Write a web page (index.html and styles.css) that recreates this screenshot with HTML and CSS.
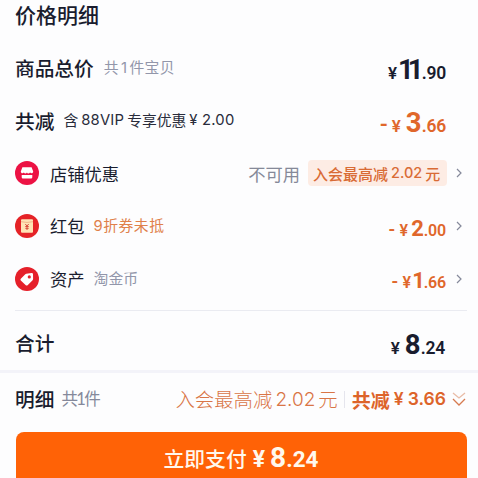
FILE: index.html
```html
<!DOCTYPE html>
<html lang="zh-CN">
<head>
<meta charset="utf-8">
<title>价格明细</title>
<link rel="stylesheet" href="styles.css">
</head>
<body>
<main class="sheet">
  <h1 class="title">价格明细</h1>
  <section class="rows">
    <div class="row">
      <span class="label">商品总价</span><span class="hint goods">共<span class="latin">1</span>件宝贝</span>
      <span class="price total"><span class="yen">¥</span><span class="int ones">11</span><span class="dec">.90</span></span>
    </div>
    <div class="row">
      <span class="label">共减</span><span class="vip"><span>含</span><span class="latin">88VIP</span><span>专享优惠</span><span class="latin amount">¥ 2.00</span></span>
      <span class="price orange"><span class="minus">-</span><span class="yen">¥</span><span class="int">3</span><span class="dec">.66</span></span>
    </div>
    <div class="row item">
      <svg class="icon" viewBox="0 0 24 24"><circle cx="12" cy="12" r="12" fill="#ec1244"/><path fill="#fff" d="M7.4 6.3h9.2l1.6 4.2c0 1.8-2 2.3-3.1 1.1-1 1.2-2.9 1.2-3.1 0-.9 1.2-2.5 1.2-3.1 0-1.1 1.2-3.1.7-3.1-1.1zM6.7 14h10.6v2.2q0 1.2-1.2 1.2H7.9q-1.2 0-1.2-1.2z"/></svg>
      <span class="name">店铺优惠</span>
      <span class="unavailable">不可用</span><span class="badge"><span>入会最高减</span><span class="latin">2.02</span><span>元</span></span>
      <svg class="chevron" viewBox="0 0 6 10"><path d="M1 1l4 4-4 4"/></svg>
    </div>
    <div class="row item">
      <svg class="icon" viewBox="0 0 24 24"><circle cx="12" cy="12" r="12" fill="#e52327"/><rect x="6" y="5.2" width="12" height="13.6" rx="1" fill="#ffe3b5"/><path d="M6 7.7q6 1.5 12 0" fill="none" stroke="#e9a074" stroke-width=".7"/><path d="M10.3 10l1.7 2 1.7-2M12 12v4M10.3 12.5h3.4M10.3 14.3h3.4" fill="none" stroke="#d94c3b" stroke-width="1"/></svg>
      <span class="name">红包</span><span class="hint coupon"><span class="latin">9</span>折券未抵</span>
      <span class="price orange small"><span class="minus">-</span><span class="yen">¥</span><span class="int">2</span><span class="dec">.00</span></span>
      <svg class="chevron" viewBox="0 0 6 10"><path d="M1 1l4 4-4 4"/></svg>
    </div>
    <div class="row item">
      <svg class="icon" viewBox="0 0 24 24"><circle cx="12" cy="12" r="12" fill="#e5202a"/><path fill="#fff" d="M11.3 6.7l5.3-.8q1.3-.1 1.4 1.2l.1 5q0 .6-.5 1.1l-5 5q-.9.8-1.8 0l-5-4.7q-.8-.8 0-1.7l4.5-4.6q.4-.4 1-.5z"/><circle cx="14.3" cy="9.9" r="1.6" fill="#e5202a"/></svg>
      <span class="name">资产</span><span class="hint coin">淘金币</span>
      <span class="price orange small"><span class="minus">-</span><span class="yen">¥</span><span class="int one">1</span><span class="dec">.66</span></span>
      <svg class="chevron" viewBox="0 0 6 10"><path d="M1 1l4 4-4 4"/></svg>
    </div>
  </section>
  <div class="sum">
    <span class="label">合计</span>
    <span class="price"><span class="yen">¥</span><span class="int">8</span><span class="dec">.24</span></span>
  </div>
</main>
<footer class="footer">
  <div class="summary">
    <span class="label">明细</span><span class="count">共1件</span>
    <span class="member"><span>入会最高减</span><span class="latin">2.02</span><span>元</span></span>
    <span class="saved"><span>共减</span><span class="latin sign">¥</span><span class="latin num">3.66</span></span>
    <svg class="expand" viewBox="0 0 14 14"><path d="M1 1l6 5 6-5" opacity=".5"/><path d="M1 7l6 6 6-6"/></svg>
  </div>
  <button class="pay"><span class="paytext">立即支付</span><span class="payyen">¥</span><span class="payint">8</span><span class="paydec">.24</span></button>
</footer>
</body>
</html>
```
FILE: styles.css
```css
* { box-sizing: border-box; }
body {
  margin: 0;
  width: 478px;
  height: 478px;
  overflow: hidden;
  background: #fdfdfe;
  color: #191c2e;
  font-family: "Noto Sans CJK SC", sans-serif;
  line-height: 1;
  white-space: nowrap;
}
.latin { font-family: Inter, "Noto Sans CJK SC", sans-serif; }
.sheet { height: 370px; padding: 0 12px 0 15px; }
.title { margin: 0; height: 42px; padding-top: 4px; font-size: 21px; line-height: 21px; font-weight: 500; }
.rows { height: 269px; margin-right: -1px; border-bottom: 1px solid #eaebf1; }
.row { display: flex; align-items: center; height: 52.6px; }
.label { font-size: 19.7px; font-weight: 500; }
.hint { color: #9296aa; font-size: 14.8px; }
.goods { margin-left: 10px; letter-spacing: .4px; }
.goods .latin { margin: 0 2px; }
.vip { display: flex; align-items: center; margin-left: 9px; font-size: 14.8px; color: #292c3b; }
.vip .latin { margin: 0 3px; letter-spacing: .2px; }
.price { display: flex; align-items: baseline; margin-left: auto; margin-right: 21px; padding-top: 5px; font-family: Roboto, sans-serif; font-weight: 600; }
.total { padding-top: 3px; }
.orange { color: #e0672b; }
.yen { font-size: 17px; margin-right: 5px; }
.int { font-size: 27.5px; font-weight: 700; line-height: 28px; }
.ones { letter-spacing: -6px; margin-right: 4px; margin-left: -3px; }
.one { margin: 0 -1px 0 -2px; }
.dec { font-size: 17.5px; letter-spacing: -.2px; }
.minus { width: 8px; margin-right: 4px; font-size: 22px; }
.total .yen { margin-right: 4px; }
.icon { width: 24px; height: 24px; flex: none; }
.name { margin-left: 11px; font-size: 17.3px; }
.unavailable { margin-left: auto; margin-right: 8px; font-size: 17.3px; color: #858998; }
.badge { display: flex; align-items: center; width: 139px; height: 26px; padding-left: 5px; border-radius: 4px; background: #fdece4; color: #d96b35; font-size: 15px; font-weight: 500; }
.badge .latin { margin: 0 3px; font-size: 14.5px; }
.chevron { width: 6px; height: 10px; margin-left: 9px; margin-right: 5px; fill: none; stroke: #85899b; stroke-width: 1.2; }
.small { margin-right: 0; padding-right: 1px; }
.small .int { font-size: 22px; }
.small .dec { font-size: 16px; }
.small .yen { font-size: 16px; margin-right: 3px; }
.small .minus { width: 7px; font-size: 18px; }
.coupon { margin-left: 9px; color: #e0804a; letter-spacing: .5px; }
.coin { margin-left: 9px; }
.sum { display: flex; align-items: center; height: 63px; }
.footer { height: 108px; border-top: 3px solid #f3f3f9; }
.summary { display: flex; align-items: center; height: 59px; padding: 0 12px 7px 15px; }
.count { margin-left: 7px; font-size: 16.5px; color: #85899b; font-family: Lato, "Noto Sans CJK SC", sans-serif; letter-spacing: -1.6px; }
.member { display: flex; align-items: center; margin-left: auto; color: #d97546; font-size: 19.4px; font-weight: 300; }
.member .latin { margin: 0 3px; font-size: 19px; }
.saved { display: flex; align-items: center; height: 17px; margin-left: 6px; padding-left: 7px; border-left: 1px solid #e5e5ed; color: #dd642a; font-size: 19px; font-weight: 700; }
.saved .latin { font-size: 17.5px; font-weight: 600; }
.saved .sign { width: 12px; margin: 0 2px 0 4px; }
.expand { width: 14px; height: 14px; margin-left: 6px; fill: none; stroke: #d67b51; stroke-width: 1.3; }
.pay { display: flex; align-items: baseline; justify-content: center; width: 451px; height: 56px; margin-left: 15.5px; padding: 10px 0 0; border: 0; border-radius: 8px; background: #ff6206; color: #fff8ed; font: 500 20.8px/1 "Noto Sans CJK SC", sans-serif; }
.paytext { margin-top: -1px; }
.payyen, .payint, .paydec { font-family: Roboto, sans-serif; font-weight: 700; line-height: 32px; }
.payyen { margin: 0 5px 0 6px; font-size: 23px; }
.payint { font-size: 28px; }
.paydec { font-size: 22.5px; }
```
